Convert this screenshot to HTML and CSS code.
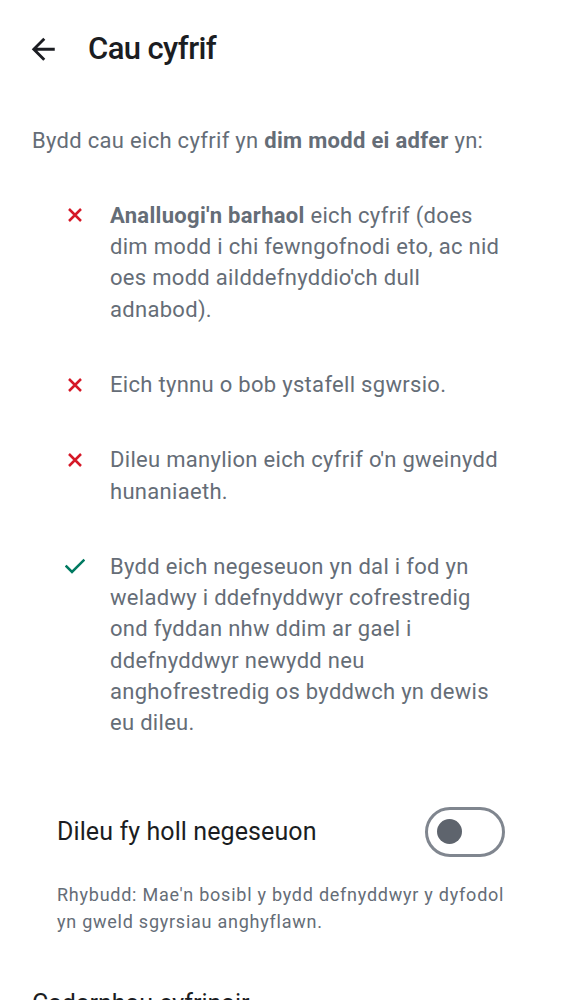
FILE: index.html
```html
<!DOCTYPE html>
<html lang="cy">
<head>
<meta charset="utf-8">
<title>Cau cyfrif</title>
<link rel="stylesheet" href="styles.css">
</head>
<body>
<div class="screen">
  <header class="topbar">
    <svg class="back" viewBox="0 0 24 24" aria-hidden="true"><path d="M20 11H7.83l5.59-5.59L12 4l-8 8 8 8 1.41-1.41L7.83 13H20v-2z"/></svg>
    <h1 class="title">Cau cyfrif</h1>
  </header>

  <p class="intro">Bydd cau eich cyfrif yn <b>dim modd ei adfer</b> yn:</p>

  <ul class="items">
    <li class="item">
      <svg class="mark bad" viewBox="0 0 16 16"><path d="M2 2L14 14M14 2L2 14"/></svg>
      <span><b>Analluogi'n barhaol</b> eich cyfrif (does dim modd i chi fewngofnodi eto, ac nid oes modd ailddefnyddio'ch dull adnabod).</span>
    </li>
    <li class="item">
      <svg class="mark bad" viewBox="0 0 16 16"><path d="M2 2L14 14M14 2L2 14"/></svg>
      <span>Eich tynnu o bob ystafell sgwrsio.</span>
    </li>
    <li class="item">
      <svg class="mark bad" viewBox="0 0 16 16"><path d="M2 2L14 14M14 2L2 14"/></svg>
      <span>Dileu manylion eich cyfrif o'n gweinydd hunaniaeth.</span>
    </li>
    <li class="item">
      <svg class="mark good" viewBox="0 0 20 16"><path d="M1.5 8.5L7 14L18.5 2.5"/></svg>
      <span>Bydd eich negeseuon yn dal i fod yn weladwy i ddefnyddwyr cofrestredig ond fyddan nhw ddim ar gael i ddefnyddwyr newydd neu anghofrestredig os byddwch yn dewis eu dileu.</span>
    </li>
  </ul>

  <div class="toggle-row">
    <span class="toggle-label">Dileu fy holl negeseuon</span>
    <span class="switch"><span class="thumb"></span></span>
  </div>
  <p class="warning">Rhybudd: Mae'n bosibl y bydd defnyddwyr y dyfodol yn gweld sgyrsiau anghyflawn.</p>

  <p class="field-label">Cadarnhau cyfrinair</p>
</div>
</body>
</html>
```

FILE: styles.css
```css
html, body {
  margin: 0;
  padding: 0;
  background: #ffffff;
}

body {
  font-family: Roboto, "Noto Sans", sans-serif;
  color: #656d77;
  overflow: hidden;
}

.screen {
  width: 562px;
  height: 1000px;
  overflow: hidden;
}

.topbar {
  display: flex;
  align-items: center;
  height: 98px;
  padding-left: 26px;
  box-sizing: border-box;
}

.back {
  width: 34.5px;
  height: 34.5px;
  fill: #1b1d22;
  flex: none;
}

.title {
  margin: 0 0 0 27.5px;
  font-size: 31px;
  font-weight: 500;
  letter-spacing: -0.6px;
  color: #1b1d22;
  line-height: 40px;
}

.intro {
  margin: 26.5px 32px 0 32px;
  font-size: 22px;
  letter-spacing: 0.3px;
  line-height: 31.3px;
}

.intro b, .item b {
  font-weight: 700;
}

.items {
  list-style: none;
  margin: 44px 0 0 0;
  padding: 0 57px 0 65px;
  display: flex;
  flex-direction: column;
  gap: 44px;
}

.item {
  display: flex;
  align-items: flex-start;
  font-size: 22px;
  letter-spacing: 0.3px;
  line-height: 31.3px;
}

.mark {
  flex: none;
  width: 20px;
  height: 16px;
  margin-top: 7.6px;
  margin-right: 25px;
  fill: none;
  stroke-width: 2.5;
}

.mark.bad {
  stroke: #d51928;
  width: 16px;
  margin-left: 1.5px;
  margin-right: 27.5px;
}

.mark.good {
  stroke: #007a61;
  stroke-linecap: square;
}

.toggle-row {
  display: flex;
  align-items: center;
  justify-content: space-between;
  margin-top: 68px;
  padding: 0 57px;
  height: 50px;
}

.toggle-label {
  font-size: 25px;
  letter-spacing: 0.1px;
  color: #1b1d22;
}

.switch {
  box-sizing: border-box;
  width: 80px;
  height: 50px;
  border: 3px solid #80868f;
  border-radius: 25px;
  display: flex;
  align-items: center;
  padding-left: 9px;
}

.thumb {
  width: 25px;
  height: 25px;
  border-radius: 50%;
  background: #5e646d;
}

.warning {
  margin: 24px 40px 0 57px;
  font-size: 18px;
  letter-spacing: 0.75px;
  line-height: 27px;
}

.field-label {
  margin: 54px 32px 0 32px;
  font-size: 25px;
  color: #1b1d22;
}
```
